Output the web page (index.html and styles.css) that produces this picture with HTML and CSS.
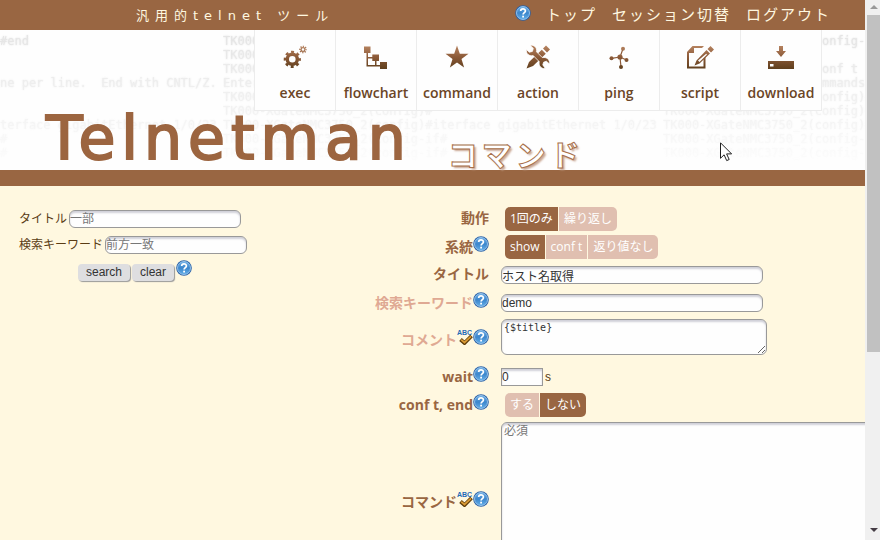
FILE: index.html
```html
<!DOCTYPE html>
<html lang="ja">
<head>
<meta charset="utf-8">
<meta name="viewport" content="width=device-width, initial-scale=1">
<title>Telnetman - コマンド</title>
<link rel="stylesheet" href="styles.css">
</head>
<body>
<svg class="defs" width="0" height="0" aria-hidden="true">
  <defs>
    <linearGradient id="bronze" gradientUnits="userSpaceOnUse" x1="0" y1="0" x2="0" y2="24">
      <stop offset="0" stop-color="#b98663"/><stop offset=".5" stop-color="#8c5a38"/><stop offset="1" stop-color="#5f3f1d"/>
    </linearGradient>
    <linearGradient id="blue" x1="0" y1="0" x2="0" y2="1">
      <stop offset="0" stop-color="#6fb0e6"/><stop offset=".5" stop-color="#3c86cc"/><stop offset="1" stop-color="#62aee8"/>
    </linearGradient>
    <symbol id="help" viewBox="0 0 16 16">
      <circle cx="8" cy="8" r="7.8" fill="#2a62a8"/>
      <circle cx="8" cy="8" r="6.5" fill="url(#blue)" stroke="#a8d0f2" stroke-width=".8"/>
      <path d="M5.7 6.1C5.7 3.2 10.4 3.2 10.4 6c0 1.700-2.300 1.700-2.300 3.600" fill="none" stroke="#fff" stroke-width="1.700"/>
      <rect x="7.200" y="10.700" width="1.800" height="1.800" fill="#fff"/>
    </symbol>
    <symbol id="spell" viewBox="0 0 16 16">
      <text x="0" y="5.500" class="abc">ABC</text>
      <path d="M3.500 10.500 7.500 14 14.500 7" fill="none" stroke="#5c3a08" stroke-width="3.800"/>
      <path d="M4.200 10.800 7.500 13.500 14 7.400" fill="none" stroke="#d99a35" stroke-width="1.800"/>
    </symbol>
  </defs>
</svg>
<div class="window">
  <div class="page">
    <header class="topbar">
      <p class="tagline">汎用的telnet ツール</p>
      <nav class="account">
        <a href="#help" aria-label="ヘルプ"><svg class="help"><use href="#help"/></svg></a>
        <a href="#top">トップ</a>
        <a href="#session">セッション切替</a>
        <a href="#logout">ログアウト</a>
      </nav>
    </header>

    <div class="banner">
      <div class="terminal" aria-hidden="true">
<pre>#end


ne per line.  End with CNTL/Z.


terface gigabitEthernet 1/0/23
#
#</pre>
<pre>TK000-XGateNMC3750_2(config-if)
TK000-XGateNMC3750_2#
TK000-XGateNMC3750_2#conf t
Enter configuration commands, o
TK000-XGateNMC3750_2(config)#
TK000-XGateNMC3750_2(config)#
TK000-XGateNMC3750_2(config)#in
TK000-XGateNMC3750_2(config-if)
TK000-XGateNMC3750_2(config-if)</pre>
<pre>#end


ne per line.  End with CNTL/Z.


terface gigabitEthernet 1/0/23
#
#</pre>
<pre>TK000-XGateNMC3750_2(config-if)
TK000-XGateNMC3750_2#
TK000-XGateNMC3750_2#conf t
Enter configuration commands, o
TK000-XGateNMC3750_2(config)#
TK000-XGateNMC3750_2(config)#
TK000-XGateNMC3750_2(config)#in
TK000-XGateNMC3750_2(config-if)
TK000-XGateNMC3750_2(config-if)</pre>
      </div>
      <nav class="tools">
        <a href="#exec"><svg class="icon" viewBox="0 0 24 24" fill="none" stroke="url(#bronze)">
          <circle cx="9.300" cy="14.300" r="5" stroke-width="3.400"/><circle cx="9.300" cy="14.300" r="7.200" stroke-width="2.800" stroke-dasharray="2.900 2.755" stroke-dashoffset="1.450"/>
          <circle cx="20" cy="4.500" r="1.900" stroke-width="1.200"/><circle cx="20" cy="4.500" r="3" stroke-width="1.700" stroke-dasharray="1.200 1.156" stroke-dashoffset=".6"/></svg>exec</a>
        <a href="#flowchart"><svg class="icon" viewBox="0 0 24 24" fill="url(#bronze)">
          <path d="M0 1.500h6.500v6.500H4v4h4.300V9.500H15V16h-2.500v4H16v-3h7v7h-7v-2.500H2.500V8H0zM4 13.500V20h7v-4H8.300v-2.500z"/></svg>flowchart</a>
        <a href="#command"><svg class="icon" viewBox="0 0 24 24" fill="url(#bronze)">
          <path d="m12 .5 2.800 8.200 8.700.1-7 5.200 2.600 8.500-7.100-5.100L4.900 22.500 7.500 14 .5 8.800l8.700-.1z"/></svg>command</a>
        <a href="#action"><svg class="icon" viewBox="0 0 24 24" fill="url(#bronze)">
          <path d="m17 3.500 3-3 4 4-3 3zM15.800 4.700l4 4L7 21l-6.500 2.500L3 17z"/>
          <path stroke="#fff" stroke-width=".8" d="M4 .3c4-.8 7.500 2.300 6.500 6.500l5.800 5.800c4.500-.8 7.700 2 7.300 6.400l-3.300-2.800-2.700 1-.8 2.700 2.600 3.600c-4.300.5-7-2.600-6.200-6.900L7.200 10.600C3 11.600-.3 8.500.4 4.500l3 2.700 3-.8.900-3z"/></svg>action</a>
        <a href="#ping"><svg class="icon" viewBox="0 0 24 24" fill="url(#bronze)">
          <path d="M4.500 13.300 13 12l6.500 3M16 3.700 13 12l1 10" fill="none" stroke="#8c5a38" stroke-width="1.200"/>
          <circle cx="16" cy="3.700" r="2"/><circle cx="4.500" cy="13.300" r="2"/><circle cx="13" cy="12" r="2.600"/><circle cx="19.500" cy="15" r="2"/><circle cx="14" cy="22" r="2"/></svg>ping</a>
        <a href="#script"><svg class="icon wide" viewBox="0 0 28 24" fill="url(#bronze)">
          <path d="M6.500 1H18l-2 2H8v5H3v13.500h14.500V14l2-2v11.500H1V7z"/>
          <path d="m21.500 4 3-3L28 4.500l-3 3zM20.500 5l3.500 3.500L13.500 18.500 8.500 20.500l2-5zM12 15.500l1.500 1.500 7.500-7.500-.8-.8z" fill-rule="evenodd"/></svg>script</a>
        <a href="#download"><svg class="icon wide" viewBox="0 0 28 24" fill="url(#bronze)">
          <path d="M12 1h4v5h3l-5 6-5-6h3zM1 16h26v8H1zm2 3v2.500h3.500V19z" fill-rule="evenodd"/></svg>download</a>
      </nav>
      <div class="titles">
        <h1>Telnetman</h1>
        <h2>コマンド</h2>
      </div>
      <svg class="cursor" viewBox="0 0 12 20" aria-hidden="true"><path d="M.5.8v15.500l3.600-3.500 2.600 5.800 2.500-1.100-2.600-5.600h5z" fill="#fff" stroke="#222"/></svg>
    </div>

    <main>
      <form class="search">
        <div class="line"><label for="q-title">タイトル</label><input id="q-title" class="box q-title" type="text" placeholder="一部"></div>
        <div class="line"><label for="q-key">検索キーワード</label><input id="q-key" class="box q-key" type="text" placeholder="前方一致"></div>
        <div class="actions"><button type="button">search</button><button type="button">clear</button><svg class="help"><use href="#help"/></svg></div>
      </form>

      <form class="editor">
        <div class="name">動作</div>
        <div class="segments">
          <label><input type="radio" name="run" checked>1回のみ</label><label><input type="radio" name="run">繰り返し</label>
        </div>
        <div class="name">系統<svg class="help"><use href="#help"/></svg></div>
        <div class="segments">
          <label><input type="radio" name="kind" checked>show</label><label><input type="radio" name="kind">conf t</label><label><input type="radio" name="kind">返り値なし</label>
        </div>
        <label class="name" for="title">タイトル</label>
        <div><input id="title" class="box" type="text" value="ホスト名取得"></div>
        <label class="name optional" for="key">検索キーワード<svg class="help"><use href="#help"/></svg></label>
        <div><input id="key" class="box" type="text" value="demo"></div>
        <label class="name optional" for="comment">コメント<svg class="help"><use href="#spell"/></svg><svg class="help"><use href="#help"/></svg></label>
        <div class="comment"><textarea id="comment" class="box">{$title}</textarea></div>
        <label class="name" for="wait">wait<svg class="help"><use href="#help"/></svg></label>
        <div class="wait"><input id="wait" class="box" type="text" value="0"><span>s</span></div>
        <div class="name">conf t, end<svg class="help"><use href="#help"/></svg></div>
        <div class="segments">
          <label><input type="radio" name="conft">する</label><label><input type="radio" name="conft" checked>しない</label>
        </div>
        <label class="name" for="body">コマンド<svg class="help"><use href="#spell"/></svg><svg class="help"><use href="#help"/></svg></label>
        <div class="body"><textarea id="body" class="box" placeholder="必須"></textarea></div>
      </form>
    </main>
  </div>
  <div class="scrollbar" aria-hidden="true"><i class="up"></i><i class="thumb"></i><i class="down"></i></div>
</div>
</body>
</html>
```
FILE: styles.css
```css
* { box-sizing: border-box; }

body {
  margin: 0;
  background: #fff8e0;
  color: #5a3c14;
  font: 12px/18px "Liberation Sans", "Noto Sans CJK JP", sans-serif;
}

a { color: inherit; text-decoration: none; }
p, h1, h2, pre { margin: 0; }
.defs { position: absolute; }
.abc { font: bold 7px "Liberation Sans", sans-serif; fill: #1f6ab8; }
.help { width: 16px; height: 16px; vertical-align: baseline; }

.window {
  display: grid;
  grid-template-columns: minmax(0, 1fr) 15px;
  height: 100vh;
  overflow: hidden;
}
.page { overflow: hidden; }

/* top bar */
.topbar {
  display: flex;
  justify-content: space-between;
  height: 30px;
  padding: 0 34px 0 136px;
  background: #996642;
  color: #fff8e0;
}
.tagline {
  font: 13px/32px "DejaVu Sans", "Noto Sans CJK JP", sans-serif;
  letter-spacing: 6px;
}
.account {
  display: flex;
  gap: 15px;
  font: 15px/28px "Noto Sans CJK JP", sans-serif;
  letter-spacing: 2px;
}
.account .help { display: block; margin-top: 5px; }

/* banner */
.banner {
  position: relative;
  height: 156px;
  border-bottom: 16px solid #996642;
  background: #fefefe;
}
.terminal {
  position: absolute;
  inset: 0;
  display: grid;
  grid-template-columns: 223px 217px 223px 217px;
  padding-top: 4px;
  overflow: hidden;
  color: #e4e4e4;
  text-shadow: 0 0 2px #dadada;
  -webkit-mask-image: linear-gradient(#000, transparent);
  mask-image: linear-gradient(#000, transparent);
}
.terminal pre {
  overflow: hidden;
  font: 12px/14px "DejaVu Sans Mono", monospace;
}
.tools {
  position: relative;
  display: flex;
  width: max-content;
  margin-left: 254px;
  border-left: 1px solid #ececec;
}
.tools a {
  display: flex;
  flex-direction: column;
  align-items: center;
  gap: 15px;
  width: 81px;
  height: 81px;
  padding-top: 15px;
  border: solid #ececec;
  border-width: 0 1px 1px 0;
  background: #fefefe;
  color: #6b4526;
  font: 600 14px/18px "Open Sans", "Noto Sans", sans-serif;
}
.icon { width: 24px; height: 24px; }
.icon.wide { width: 28px; }
.titles {
  position: absolute;
  left: 46px;
  bottom: 0;
  display: flex;
  align-items: flex-end;
  gap: 36px;
  color: #9c6540;
}
h1 {
  font: 60px/64px "DejaVu Sans", sans-serif;
  letter-spacing: 6px;
  -webkit-text-stroke: 2px #9c6540;
}
h2 {
  padding-bottom: 1px;
  font: bold 30px/32px "Noto Sans CJK JP", sans-serif;
  letter-spacing: 4px;
  color: #fff;
  -webkit-text-stroke: 1px #a8704a;
  text-shadow: 2px 2px 2px #c9a793;
}
.cursor { position: absolute; left: 720px; top: 112px; width: 12px; height: 20px; }

/* form controls */
.box {
  display: block;
  width: 262px;
  height: 18px;
  margin: 0;
  padding: 0;
  border: 1px solid #999;
  border-radius: 6px;
  background: #fefefe;
  box-shadow: inset 0 2px 2px #d0d0d8;
  color: #333;
  font: 12px/16px "Liberation Sans", "Noto Sans CJK JP", sans-serif;
}
.box::placeholder { color: #777; }

main {
  display: flex;
  align-items: flex-start;
  padding-top: 19px;
}
.search { flex: 0 0 339px; padding: 5px 0 0 19px; }
.line { display: flex; margin-bottom: 8px; }
.line label { margin-right: 2px; }
.q-title { width: 172px; }
.q-key { width: 142px; }
.actions { display: flex; gap: 2px; padding-left: 59px; }
.actions button {
  height: 17px;
  margin-top: 2px;
  padding: 0 8px;
  border: 0;
  border-radius: 4px;
  background: #dedee0;
  box-shadow: 1px 1px 1px #999;
  color: #333;
  font: 12px/17px "Liberation Sans", sans-serif;
}
.actions .help { margin-top: -2px; }

.editor {
  display: grid;
  grid-template-columns: 150px max-content;
  grid-template-rows: 28px 28px 28px 28px 46px 28px 28px 166px;
  column-gap: 12px;
  align-items: center;
}
.name {
  padding-bottom: 2px;
  color: #996642;
  font: bold 14px/20px "Open Sans", "Noto Sans CJK JP", sans-serif;
  text-align: right;
  white-space: nowrap;
}
.optional { color: #dfa993; }

.segments { display: flex; gap: 1px; padding-left: 4px; }
.segments label {
  position: relative;
  padding: 0 5px;
  background: #e0bfb0;
  color: #fff;
  font: 12px/24px "Open Sans", "Noto Sans CJK JP", sans-serif;
}
.segments label:has(:checked) { background: #996642; }
.segments label:first-child { border-radius: 5px 0 0 5px; }
.segments label:last-child { border-radius: 0 5px 5px 0; }
.segments input { position: absolute; inset: 0; margin: 0; opacity: 0; }

.comment { align-self: start; padding-top: 2px; }
.comment .box {
  width: 266px;
  height: 36px;
  padding-left: 2px;
  font: 10px/16px "DejaVu Sans Mono", monospace;
}
.wait { display: flex; gap: 2px; }
.wait .box { width: 42px; border-radius: 0; }
.body .box { width: 480px; height: 160px; padding-left: 2px; }

/* scrollbar */
.scrollbar {
  display: flex;
  flex-direction: column;
  align-items: center;
  padding: 5px 0 8px 2px;
  background: #f0f0f0;
}
.up, .down { border: solid transparent; border-width: 0 4px; }
.up { border-bottom: 4px solid #999; }
.down { margin-top: auto; border-top: 4px solid #443c44; }
.thumb { width: 100%; height: 64%; margin-top: 6px; background: #c1c1c1; }
```
